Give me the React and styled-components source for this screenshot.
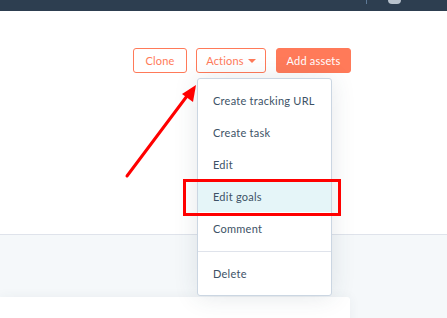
import React from "react";
import styled, { createGlobalStyle } from "styled-components";

const GlobalStyle = createGlobalStyle`
  html, body {
    margin: 0;
    padding: 0;
    background: #f5f8fa;
  }
  body {
    font-family: "Lato", "Open Sans", sans-serif;
    color: #33475b;
    overflow: hidden;
  }
`;

const Page = styled.div`
  width: 447px;
  height: 318px;
  position: relative;
  overflow: hidden;
`;

const TopNav = styled.header`
  height: 11px;
  background: #2d3e50;
  display: flex;
  justify-content: flex-end;
  align-items: flex-start;
  padding-right: 46px;
  gap: 21px;
`;

const NavDivider = styled.span`
  width: 1px;
  height: 4px;
  background: #5d7996;
`;

const NavAvatar = styled.span`
  width: 13px;
  height: 4px;
  border-radius: 0 0 8px 8px;
  background: #b8c2cc;
`;

const Header = styled.section`
  height: 224px;
  background: #ffffff;
  border-bottom: 1px solid #dfe3eb;
  display: flex;
  justify-content: flex-end;
  align-items: flex-start;
  padding: 37px 96px 0 0;
  box-sizing: border-box;
`;

const ButtonRow = styled.div`
  display: flex;
  gap: 9px;
`;

const Button = styled.button`
  width: ${(p) => p.$w}px;
  height: 25px;
  box-sizing: border-box;
  padding: 0;
  border-radius: 3px;
  border: 1px solid #ff7a59;
  background: ${(p) => (p.$primary ? "#ff7a59" : "#ffffff")};
  color: ${(p) => (p.$primary ? "#ffffff" : "#ff7a59")};
  font-family: "Lato", "Open Sans", sans-serif;
  font-size: 11px;
  letter-spacing: 0.2px;
  display: flex;
  align-items: center;
  justify-content: center;
  gap: 4px;
  cursor: pointer;
`;

const Caret = styled.span`
  width: 0;
  height: 0;
  border-left: 4px solid transparent;
  border-right: 4px solid transparent;
  border-top: 4px solid #ff7a59;
  margin-top: 1px;
`;

const ActionsWrap = styled.div`
  position: relative;
  margin-right: 1px;
`;

const Menu = styled.div`
  position: absolute;
  top: 30px;
  left: 1px;
  width: 135px;
  background: #ffffff;
  border: 1px solid #cbd6e2;
  border-radius: 3px;
  box-shadow: 0 1px 24px rgba(45, 62, 80, 0.12);
  box-sizing: border-box;
  z-index: 2;
`;

const MenuGroup = styled.ul`
  list-style: none;
  margin: 0;
  padding: ${(p) => p.$pad};
  & + & {
    border-top: 1px solid #dfe3eb;
  }
`;

const MenuItem = styled.li`
  height: 32px;
  display: flex;
  align-items: center;
  padding-left: 15px;
  font-size: 11px;
  letter-spacing: 0.25px;
  color: #3d5266;
  background: ${(p) => (p.$active ? "#e5f5f8" : "transparent")};
`;

const Lower = styled.section`
  background: #f5f8fa;
  padding-top: 62px;
`;

const Card = styled.div`
  width: 350px;
  height: 40px;
  background: #ffffff;
  border-radius: 0 3px 0 0;
  box-shadow: 0 0 12px rgba(45, 62, 80, 0.06);
`;

const HighlightBox = styled.div`
  position: absolute;
  left: 183px;
  top: 179px;
  width: 158px;
  height: 37px;
  box-sizing: border-box;
  border: 3px solid #ff0000;
  z-index: 3;
  pointer-events: none;
`;

const ArrowSvg = styled.svg`
  position: absolute;
  left: 120px;
  top: 80px;
  z-index: 3;
  pointer-events: none;
`;

const items = ["Create tracking URL", "Create task", "Edit", "Edit goals", "Comment"];

export default function App() {
  return (
    <Page>
      <GlobalStyle />
      <TopNav>
        <NavDivider />
        <NavAvatar />
      </TopNav>
      <Header>
        <ButtonRow>
          <Button $w={54}>Clone</Button>
          <ActionsWrap>
            <Button $w={70}>
              Actions <Caret />
            </Button>
            <Menu>
              <MenuGroup $pad="5px 0 7px">
                {items.map((label) => (
                  <MenuItem key={label} $active={label === "Edit goals"}>
                    {label}
                  </MenuItem>
                ))}
              </MenuGroup>
              <MenuGroup $pad="5px 0 6px">
                <MenuItem>Delete</MenuItem>
              </MenuGroup>
            </Menu>
          </ActionsWrap>
          <Button $primary $w={75}>Add assets</Button>
        </ButtonRow>
      </Header>
      <Lower>
        <Card />
      </Lower>
      <HighlightBox />
      <ArrowSvg width="80" height="100" viewBox="0 0 80 100">
        <line x1="7" y1="96" x2="70" y2="12" stroke="#ff0000" strokeWidth="3" strokeLinecap="round" />
        <polygon points="76,5 73,22 62,14" fill="#ff0000" />
      </ArrowSvg>
    </Page>
  );
}
